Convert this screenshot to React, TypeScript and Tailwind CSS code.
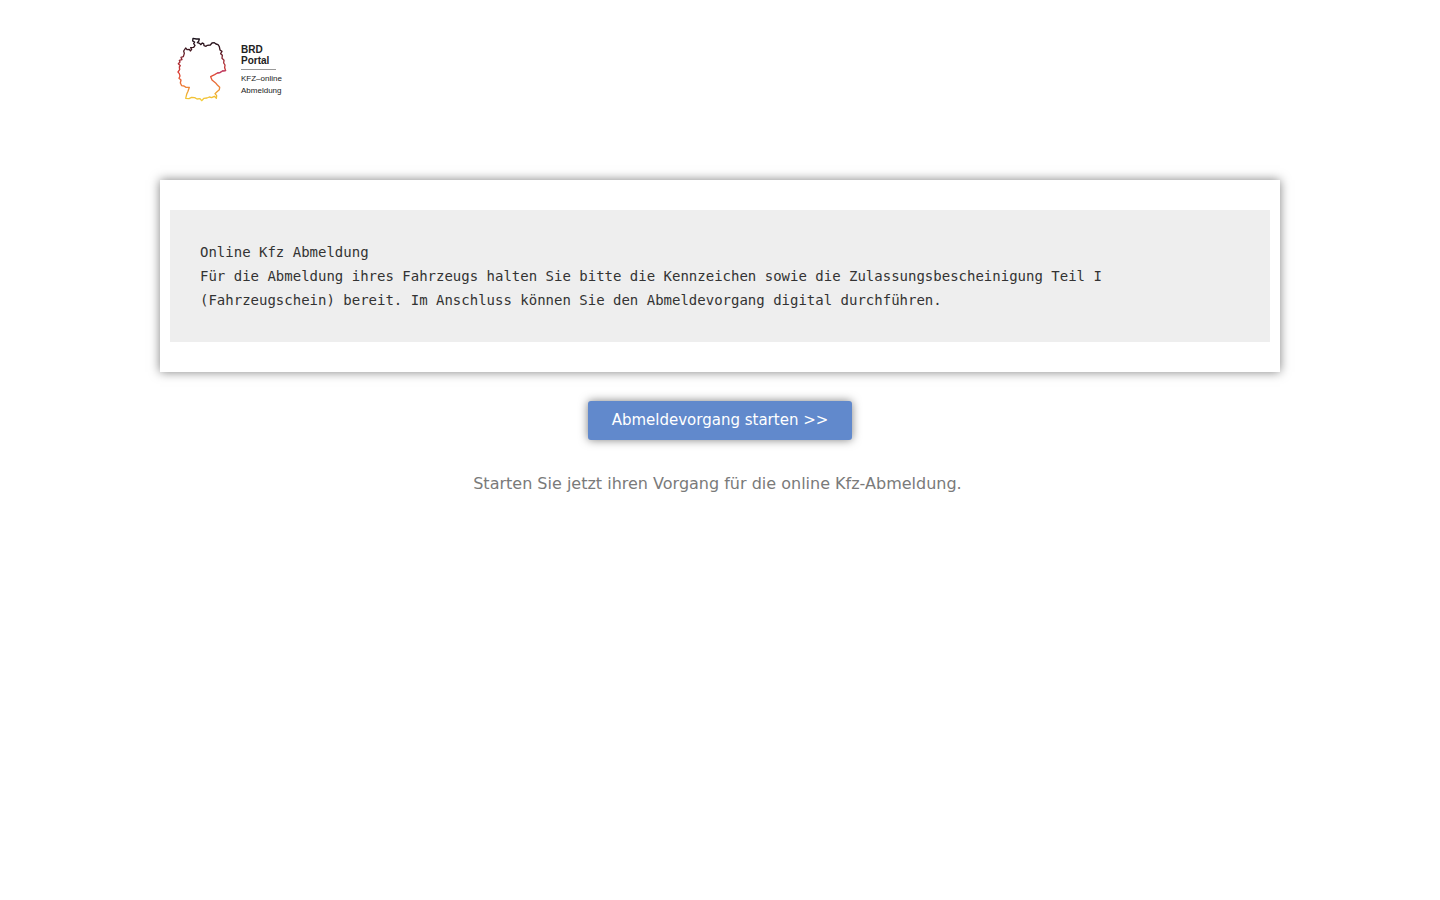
import type { ReactNode } from "react";

export default function App() {
  return (
    <div className="bg-white px-4 pb-16 font-['DejaVu_Sans',sans-serif]">
      <div className="mx-auto max-w-[1120px]">
        <header className="pt-[30px] pb-[70px]">
          <Logo />
        </header>

        <main className="flex flex-col items-center">
          <InfoBox>
            {
              "Online Kfz Abmeldung\nFür die Abmeldung ihres Fahrzeugs halten Sie bitte die Kennzeichen sowie die Zulassungsbescheinigung Teil I (Fahrzeugschein) bereit. Im Anschluss können Sie den Abmeldevorgang digital durchführen."
            }
          </InfoBox>

          <button
            type="button"
            className="mt-[29px] cursor-pointer rounded-[3px] bg-[#6189cc] px-6 py-3 text-[15px] leading-[15px] text-white shadow-[0_0_10px_rgba(0,0,0,0.5)] hover:bg-[#5078bb]"
          >
            Abmeldevorgang starten &gt;&gt;
          </button>

          <p className="mt-8 text-center text-base text-[#7a7a7a]">
            Starten Sie jetzt ihren Vorgang für die online Kfz-Abmeldung.&nbsp;
          </p>
        </main>
      </div>
    </div>
  );
}

function InfoBox({ children }: { children: ReactNode }) {
  return (
    <section className="w-full bg-white px-[10px] py-[30px] shadow-[0_0_10px_rgba(0,0,0,0.5)]">
      <pre className="bg-[#eeeeee] p-[30px] font-['DejaVu_Sans_Mono',monospace] text-[14px] leading-6 whitespace-pre-wrap text-[#333333]">
        {children}
      </pre>
    </section>
  );
}

// Map outline of Germany, coloured from black over red to gold
function Logo() {
  return (
    <a
      href="#"
      className="inline-flex h-20 gap-[10px] pl-[5px] align-top font-['Liberation_Sans',sans-serif] text-[#222222]"
    >
      <svg width="66" height="80" viewBox="0 0 198 240" fill="none" aria-hidden="true">
        <defs>
          <linearGradient id="flag" gradientUnits="userSpaceOnUse" x1="0" y1="24" x2="0" y2="212">
            <stop offset="0" stopColor="#17101a" />
            <stop offset="0.18" stopColor="#3d1720" />
            <stop offset="0.36" stopColor="#9c2a35" />
            <stop offset="0.55" stopColor="#dc3f38" />
            <stop offset="0.76" stopColor="#ec7a38" />
            <stop offset="0.92" stopColor="#f0b832" />
            <stop offset="1" stopColor="#f3cf3c" />
          </linearGradient>
        </defs>
        <path
          stroke="url(#flag)"
          strokeWidth="4"
          strokeLinejoin="round"
          d="M84 25L94 27L103 27L101 34L97 38L104 40L107 44L112 39L116 41L117 47L123 49L127 46L136 45L141 39L148 38L153 42L159 44L163 50L165 60L171 64L167 71L172 76L171 85L177 91L176 99L180 105L179 113L182 122L172 123L165 128L157 129L149 134L137 140L141 150L151 158L157 165L164 172L163 179L156 185L150 191L155 197L154 205L148 199L140 203L133 201L126 204L117 205L110 212L105 206L96 207L89 203L80 202L72 206L62 205L65 193L69 184L73 172L63 172L57 168L50 167L46 159L48 150L42 145L45 138L43 131L39 126L44 119L43 111L46 107L40 101L45 96L43 91L51 89L48 82L55 80L58 70L56 63L62 54L66 59L73 58L76 63L80 58L77 53L86 52L90 46L86 41L89 36L83 33Z"
        />
        <path stroke="#b43b7a" strokeWidth="3" d="M157 129L165 128L172 123L182 122" />
      </svg>
      <span className="flex flex-col pt-[14px]">
        <span className="text-[10px] leading-[11px] font-bold">BRD</span>
        <span className="text-[10px] leading-[12px] font-bold">Portal</span>
        <span className="mt-[2px] mb-[3px] h-px w-[35px] bg-[#999999]" />
        <span className="text-[8px] leading-[12px]">KFZ–online</span>
        <span className="text-[8px] leading-[12px]">Abmeldung</span>
      </span>
    </a>
  );
}
